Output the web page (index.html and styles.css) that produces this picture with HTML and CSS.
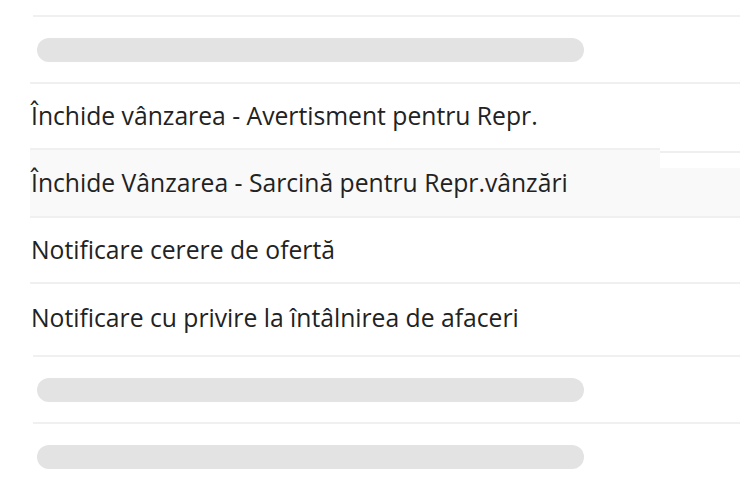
FILE: index.html
```html
<!DOCTYPE html>
<html lang="ro">

<head>
    <meta charset="UTF-8">
    <meta name="viewport" content="width=device-width, initial-scale=1.0">
    <title>Notificări</title>
    <link rel="stylesheet" href="styles.css">
</head>

<body>
    <div class="list">
        <div class="row skeleton">
            <div class="bar"></div>
        </div>
        <div class="row item">Închide vânzarea - Avertisment pentru Repr.</div>
        <div class="row item active">Închide Vânzarea - Sarcină pentru Repr.vânzări</div>
        <div class="row item">Notificare cerere de ofertă</div>
        <div class="row item tall">Notificare cu privire la întâlnirea de afaceri</div>
        <div class="row skeleton">
            <div class="bar"></div>
        </div>
        <div class="row skeleton">
            <div class="bar"></div>
        </div>
    </div>
</body>

</html>
```

FILE: styles.css
```css
body {
    margin: 0;
    background: white;
    font-family: "Open Sans", Arial, sans-serif;
    color: #222;
}

.list {
    padding: 15px 0 0 30px;
}

.row {
    border-top: 2px solid #f0f0f0;
}

.skeleton {
    margin-left: 3px;
    padding: 21px 0 20px 4px;
}

.bar {
    width: 547px;
    height: 24px;
    border-radius: 12px;
    background-color: #e3e3e3;
}

.item {
    height: 62px;
    display: flex;
    align-items: center;
    padding: 0 0 2px 1px;
    font-size: 24.7px;
}

.item.active {
    position: relative;
    height: 64px;
    background-color: #f9f9f9;
}

.item.active::after {
    content: "";
    position: absolute;
    top: -2px;
    left: 630px;
    right: 0;
    height: 20px;
    background: linear-gradient(#fff 0 3px, #efefef 3px 5px, #fff 5px);
}

.item.tall {
    height: 67px;
    padding-bottom: 4px;
}
```
